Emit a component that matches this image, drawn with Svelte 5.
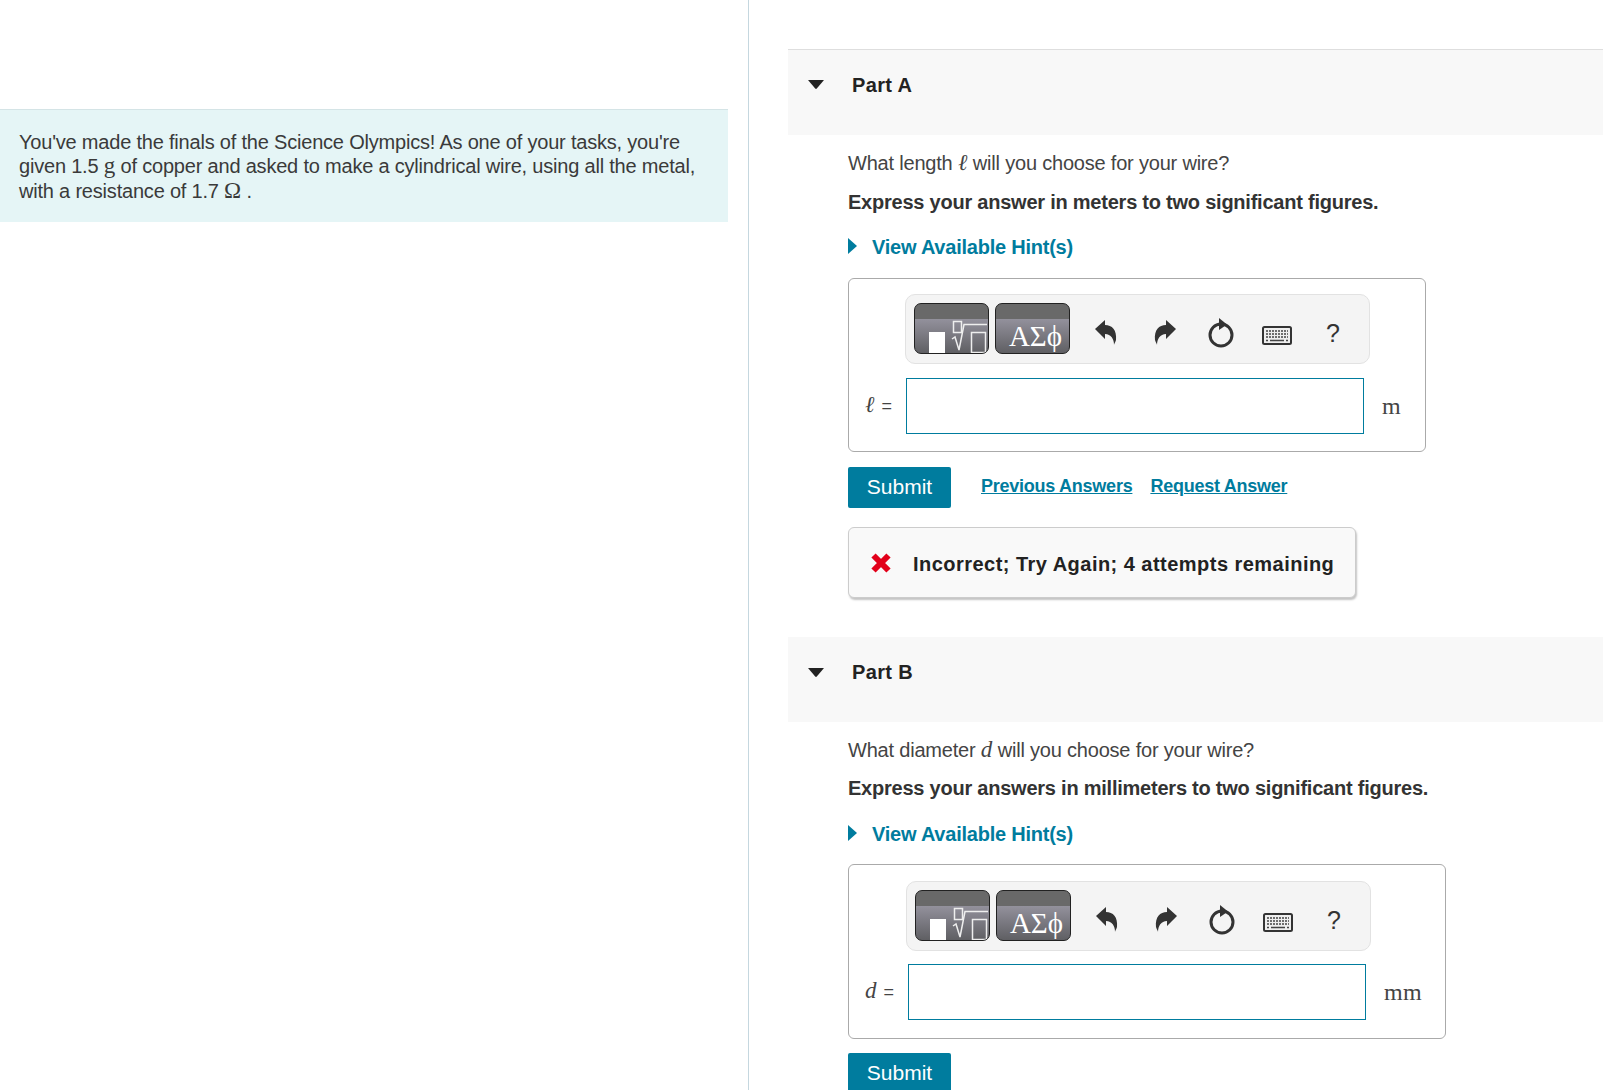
<script>
  const parts = [
    { name: 'Part A', varName: 'ℓ', q: 'What length', q2: 'will you choose for your wire?', inst: 'Express your answer in meters to two significant figures.', unit: 'm', wide: false, fb: true },
    { name: 'Part B', varName: 'd', q: 'What diameter', q2: 'will you choose for your wire?', inst: 'Express your answers in millimeters to two significant figures.', unit: 'mm', wide: true, fb: false }
  ];
</script>

<div class="page">
  <aside class="left">
    <div class="intro">You've made the finals of the Science Olympics! As one of your tasks, you're given 1.5 <span class="m">g</span> of copper and asked to make a cylindrical wire, using all the metal, with a resistance of 1.7 <span class="m">Ω</span> .</div>
  </aside>
  <main class="right">
    {#each parts as p}
      <section class="part" class:b={p.wide}>
        <header class="phead">
          <svg class="caret" width="16" height="9" viewBox="0 0 16 9"><path d="M0.5 0H15.5Q16 0 15.6 0.6L8.8 8.6Q8 9.2 7.2 8.6L0.4 0.6Q0 0 0.5 0Z" fill="#222"/></svg>
          <h2>{p.name}</h2>
        </header>
        <div class="body">
          <p class="q">{p.q} <i class="m">{p.varName}</i> {p.q2}</p>
          <p class="inst">{p.inst}</p>
          <div class="hint">
            <svg width="9" height="16" viewBox="0 0 9 16"><path d="M0 0L9 8L0 16Z" fill="#007c9e"/></svg>
            <span>View Available Hint(s)</span>
          </div>
          <div class="box" class:wide={p.wide}>
            <div class="toolbar">
              <div class="tb">
                <svg width="73" height="49" viewBox="0 0 73 49">
                  <rect x="14" y="28" width="16" height="21" fill="#fff"/>
                  <g fill="none" stroke="#eee" stroke-width="1.5">
                    <rect x="38.5" y="17.5" width="8" height="11"/>
                    <path d="M37 35L40 33L44 46L49 20.5H72"/>
                    <rect x="56.5" y="28.5" width="14" height="20"/>
                  </g>
                </svg>
              </div>
              <div class="tb greek">ΑΣϕ</div>
              <div class="ic undo"><svg width="24" height="28" viewBox="0 0 24 28"><path d="M1 10L11 1V6C18 6 23 11 22 21C21 24 20 25 20 26C20 20 17 15 11 15V20Z" fill="#333"/></svg></div>
              <div class="ic redo"><svg width="24" height="28" viewBox="0 0 24 28"><path d="M23 10L13 1V6C6 6 1 11 2 21C3 24 4 25 4 26C4 20 7 15 13 15V20Z" fill="#333"/></svg></div>
              <div class="ic reload"><svg width="28" height="30" viewBox="0 0 28 30"><circle cx="14" cy="17" r="11" fill="none" stroke="#333" stroke-width="3"/><path d="M12 0L20 6.5L12 12Z" fill="#333"/></svg></div>
              <div class="ic kbd"><svg width="30" height="20" viewBox="0 0 30 20"><rect x="1" y="1" width="28" height="17" rx="1.5" fill="#eee" stroke="#333" stroke-width="2"/><path d="M4 5H26M4 8H26M4 11H26" stroke="#444" stroke-width="1.6" stroke-dasharray="2 1"/><path d="M8 14.5H22M4 14.5H6M24 14.5H26" stroke="#444" stroke-width="1.6"/></svg></div>
              <div class="ic help">?</div>
            </div>
            <div class="row">
              <label class="lab" for={p.name}><i class="m">{p.varName}</i> =</label>
              <input id={p.name} type="text" />
              <span class="unit">{p.unit}</span>
            </div>
          </div>
          <div class="actions">
            <button>Submit</button>
            {#if p.fb}
              <a href="#p">Previous Answers</a>
              <a href="#r">Request Answer</a>
            {/if}
          </div>
          {#if p.fb}
            <div class="fb">
              <svg width="22" height="22" viewBox="0 0 22 22"><path d="M3.5 3.5L18.5 18.5M18.5 3.5L3.5 18.5" stroke="#e2001a" stroke-width="6"/></svg>
              <span>Incorrect; Try Again; 4 attempts remaining</span>
            </div>
          {/if}
        </div>
      </section>
    {/each}
  </main>
</div>

<style>
  :global(body) { margin: 0; background: #fff; overflow: hidden; }
  .page { display: flex; height: 1090px; overflow: hidden; font-family: "Liberation Sans", Arial, sans-serif; color: #333; font-size: 20px; }
  .left { width: 748px; flex: none; border-right: 1px solid #c5d7df; padding-top: 109px; }
  .intro { width: 728px; box-sizing: border-box; background: #e5f5f6; border-top: 1px solid #d4e4e6; padding: 20px 19px 18px; font-size: 20px; line-height: 24.4px; color: #3a3a3a; letter-spacing: -0.2px; height: 113px; }
  .m { font-family: "Liberation Serif", "DejaVu Serif", serif; font-size: 23px; line-height: 0; letter-spacing: 0; }
  i.m { font-style: italic; }
  .right { flex: 1; padding: 49px 0 0 39px; min-width: 0; }
  .part.b { margin-top: 39px; }
  .phead { background: #f8f8f8; border-top: 1px solid #dedede; display: flex; align-items: flex-start; padding: 24px 0 0 20px; height: 61px; }
  .part.b .phead { border-top-color: #f8f8f8; height: 60px; }
  .part.b h2 { margin-top: -1px; }
  .caret { margin: 6px 0 0; }
  h2 { margin: 0 0 0 28px; font-size: 20px; line-height: 22px; font-weight: 700; color: #222; letter-spacing: 0.35px; }
  .body { padding: 15px 0 0 60px; }
  .q { margin: 0; line-height: 26px; color: #444; letter-spacing: -0.2px; }
  .inst { margin: 13px 0 0; line-height: 26px; font-weight: 700; color: #333; letter-spacing: -0.23px; }
  .part.b .inst { margin-top: 12px; }
  .hint { margin-top: 19px; display: flex; align-items: center; gap: 15px; height: 26px; color: #007c9e; font-weight: 700; letter-spacing: -0.23px; }
  .part.b .hint { margin-top: 20px; }
  .hint svg { margin-top: -3px; }
  .box { margin-top: 18px; width: 578px; height: 174px; box-sizing: border-box; border: 1px solid #aaa; border-radius: 6px; padding: 15px 0 0 56px; }
  .box.wide { width: 598px; height: 175px; padding-top: 16px; margin-top: 17px; }
  .toolbar { width: 465px; height: 70px; box-sizing: border-box; border: 1px solid #e2e2e2; border-radius: 10px; background: #f4f4f4; display: flex; align-items: center; padding: 0 0 2px 8px; gap: 6px; }
  .wide .toolbar { margin-left: 1px; }
  .tb { width: 75px; height: 51px; box-sizing: border-box; border: 1px solid #222; border-bottom-width: 1.5px; border-radius: 7px; overflow: hidden; background: linear-gradient(#696969 0 15px, #93919c 15px, #5f5f63 100%); display: flex; }
  .greek { color: #fff; font-family: "Liberation Serif", serif; font-size: 29px; align-items: flex-end; justify-content: flex-end; padding: 0 7px 0 0; line-height: 34px; }
  .ic { width: 56px; margin-left: -6px; display: flex; justify-content: center; align-items: center; height: 52px; }
  .ic.undo { margin-left: 2px; }
  .ic.redo { margin-left: -3px; }
  .ic.undo svg, .ic.redo svg { margin-top: 9px; }
  .ic.reload svg { margin-top: 9px; }
  .ic.kbd svg { margin-top: 15px; }
  .help { font-size: 25px; color: #333; padding-top: 10px; box-sizing: border-box; }
  .row { display: flex; align-items: center; margin-top: 14px; margin-left: -56px; }
  .wide .row { margin-top: 13px; }
  .lab { width: 57px; padding-left: 16px; box-sizing: border-box; font-size: 18px; font-family: "Liberation Sans", sans-serif; white-space: nowrap; color: #444; word-spacing: 2px; }
  .lab i { font-size: 23px; }
  input { width: 458px; height: 56px; box-sizing: border-box; border: 1px solid #007c9e; padding: 0; background: #fff; outline: none; }
  .wide input { margin-left: 2px; }
  .unit { margin-left: 18px; font-family: "Liberation Serif", serif; font-size: 24px; color: #444; letter-spacing: 0.4px; }
  .actions { margin-top: 15px; display: flex; align-items: flex-start; height: 41px; }
  .part.b .actions { margin-top: 14px; }
  button { width: 103px; height: 41px; background: #007c9e; color: #fff; border: 0; border-radius: 2px; font: 21px "Liberation Sans", Arial, sans-serif; padding: 0 0 2px; }
  a { color: #007c9e; font-weight: 700; font-size: 18px; line-height: 38px; margin-left: 18px; letter-spacing: -0.25px; }
  a:first-of-type { margin-left: 30px; }
  .fb { margin-top: 19px; width: 508px; height: 71px; box-sizing: border-box; border: 1px solid #ccc; border-radius: 6px; background: #f9f9f9; box-shadow: 1px 2px 2px #c4c4c4; display: flex; align-items: center; padding-left: 21px; gap: 21px; font-weight: 700; color: #222; letter-spacing: 0.47px; }
  .fb svg { margin-top: 1px; }
  .fb span { padding-top: 4px; }
</style>
